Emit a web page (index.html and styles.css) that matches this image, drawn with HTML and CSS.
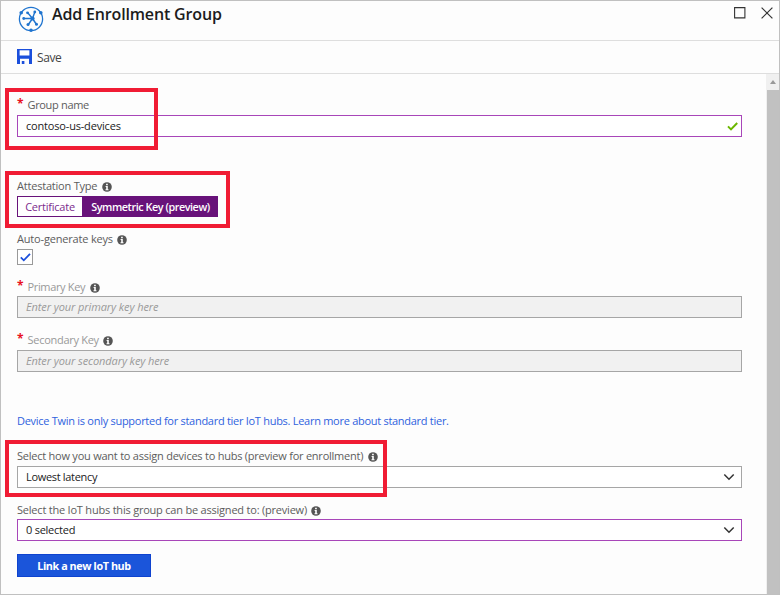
FILE: index.html
```html
<!DOCTYPE html>
<html lang="en">
<head>
<meta charset="utf-8">
<title>Add Enrollment Group</title>
<link rel="stylesheet" href="styles.css">
</head>
<body>
<svg class="defs" width="0" height="0">
  <symbol id="info" viewBox="0 0 10 10"><circle cx="5" cy="5" r="4.8" fill="#555"/><path d="M4.1 1.7h1.7v1.5H4.1zM3.6 4h2.2v3.3h.7v.9H3.5v-.9h.7V4.9h-.6z" fill="#fff"/></symbol>
  <symbol id="chevron" viewBox="0 0 12 8"><path d="M1.3 1.5 6 6.2l4.7-4.7" fill="none" stroke="#333" stroke-width="1.5"/></symbol>
</svg>
<div class="blade">
  <header class="header">
    <svg class="logo" viewBox="0 0 26 26">
      <g fill="none" stroke="#1f74cf">
        <circle cx="13" cy="13" r="11.6" stroke-width="1.3"/>
        <path d="M14.5 12.5 9.5 6.5M14.5 12.5 17 5.5M14.5 12.5H6M14.5 12.5 10 19M14.5 12.5l4 6" stroke-width="1.4"/>
      </g>
      <g fill="#1f74cf">
        <circle cx="14.5" cy="12.5" r="2.1"/><circle cx="9.5" cy="6.8" r="1.4"/><circle cx="16.8" cy="6" r="1.4"/><circle cx="5.7" cy="12.5" r="1.4"/><circle cx="10" cy="18.5" r="1.5"/><circle cx="18.5" cy="18.2" r="1.5"/>
        <circle cx="3.2" cy="6.8" r="1.8"/><circle cx="22.8" cy="6.8" r="1.8"/><circle cx="13" cy="24.2" r="1.8"/>
      </g>
    </svg>
    <h1 class="title"><span>Add Enrollment Group</span></h1>
    <div class="window-buttons">
      <svg width="12" height="12" viewBox="0 0 12 12"><path d="M.6.6h10.3v10.3H.6z" fill="none" stroke="#333" stroke-width="1.1"/></svg>
      <svg width="12" height="12" viewBox="0 0 12 12"><path d="m.6.6 10.8 10.8M11.4.6.6 11.4" stroke="#333" stroke-width="1.2"/></svg>
    </div>
  </header>
  <div class="toolbar">
    <svg width="15" height="15" viewBox="0 0 15 15"><path d="M0 0h15v15h-3V9.7H3V15H0z" fill="#1b4fdc"/><path d="M2.6 1.3h9.8v5.2H2.6z" fill="#fff"/><path d="M4.8 12h2.6v3H4.8z" fill="#1b4fdc"/></svg>
    <span class="save">Save</span>
  </div>
  <main class="body">
    <div class="form">
      <div class="label"><b class="star">*</b><span class="t-group">Group name</span></div>
      <div class="input active"><span class="t-contoso">contoso-us-devices</span><svg class="valid" width="11" height="9" viewBox="0 0 11 9"><path d="m1 4.4 3 3L10.2 1" fill="none" stroke="#6bb700" stroke-width="2"/></svg></div>

      <div class="label attestation"><span class="t-attest">Attestation Type</span><svg class="info"><use href="#info"/></svg></div>
      <div class="toggle"><span class="option"><span class="t-cert">Certificate</span></span><span class="option selected"><span class="t-sym">Symmetric Key (preview)</span></span></div>

      <div class="label auto"><span class="t-auto">Auto-generate keys</span><svg class="info"><use href="#info"/></svg></div>
      <div class="checkbox"><svg width="11" height="9" viewBox="0 0 11 9"><path d="m.8 4.3 3 3L10 .9" fill="none" stroke="#1b4fdc" stroke-width="1.8"/></svg></div>

      <div class="label muted primary"><b class="star">*</b><span class="t-primary">Primary Key</span><svg class="info"><use href="#info"/></svg></div>
      <div class="input disabled"><span class="t-enter">Enter your primary key here</span></div>

      <div class="label muted secondary"><b class="star">*</b><span class="t-secondary">Secondary Key</span><svg class="info"><use href="#info"/></svg></div>
      <div class="input disabled"><span class="t-enter">Enter your secondary key here</span></div>

      <div class="label link"><span class="t-link">Device Twin is only supported for standard tier IoT hubs. Learn more about standard tier.</span></div>

      <div class="label assign"><span class="t-assign">Select how you want to assign devices to hubs (preview for enrollment)</span><svg class="info"><use href="#info"/></svg></div>
      <div class="input select"><span class="t-lowest">Lowest latency</span><svg class="chevron"><use href="#chevron"/></svg></div>

      <div class="label hubs"><span class="t-hubs">Select the IoT hubs this group can be assigned to: (preview)</span><svg class="info"><use href="#info"/></svg></div>
      <div class="input active select"><span class="t-zero">0 selected</span><svg class="chevron"><use href="#chevron"/></svg></div>

      <div class="button"><span class="t-button">Link a new IoT hub</span></div>
    </div>
    <div class="scrollbar"><div class="up"></div><div class="thumb"></div></div>
  </main>
  <div class="highlight one"></div>
  <div class="highlight two"></div>
  <div class="highlight three"></div>
</div>
</body>
</html>
```
FILE: styles.css
```css
* { box-sizing: border-box; }
body { margin: 0; font-family: "Open Sans", "Noto Sans", sans-serif; font-size: 11px; color: #333; }
svg { display: block; flex: none; }
.defs { position: absolute; }
.blade { position: relative; display: flex; flex-direction: column; width: 780px; height: 595px; border: 1px solid #c0c0c0; background: #fdfdfd; overflow: hidden; white-space: nowrap; }
.header { display: flex; flex: none; height: 40px; padding: 5px 6px 0 17px; border-bottom: 1px solid #dedede; }
.logo { width: 26px; height: 26px; }
.title { margin: -5px 0 0 8px; font-size: 16px; line-height: 26px; font-weight: 600; color: #1c1c1c; letter-spacing: -.16px; }
.window-buttons { display: flex; gap: 15px; margin: 1px 0 0 auto; }
.toolbar { display: flex; flex: none; align-items: center; gap: 5px; height: 33px; padding: 0 16px 2px; border-bottom: 1px solid #dedede; }
.save { font-size: 12px; letter-spacing: -.4px; padding-top: 2px; color: #444; }
.body { display: flex; flex: 1; min-height: 0; }
.form { flex: 1; padding: 23px 23px 0 16px; }
.label { display: flex; align-items: center; height: 16px; margin-bottom: 2px; padding-bottom: 2px; color: #5c5c5c; }
.star { width: 10.5px; font-size: 12px; line-height: 12px; color: #e81123; }
.info { width: 10px; height: 10px; margin: 3px 0 0 4.5px; }
.input { display: flex; align-items: center; justify-content: space-between; width: 725px; height: 22px; padding: 0 3px 0 8px; border: 1px solid #a6a6a6; background: #fff; color: #222; }
.input > span { padding-bottom: 2px; }
.active { border-color: #a846b9; }
.disabled { background: #f1f1f1; color: #999; font-style: italic; }
.select { padding-right: 6px; }
.chevron { width: 12px; height: 8px; }
.muted { color: #999; }
.attestation { margin-top: 41px; }
.toggle { display: flex; width: 201px; height: 21px; }
.option { display: flex; align-items: center; justify-content: center; width: 66px; border: 1px solid #68127a; background: #fff; color: #7c2c8d; }
.selected { flex: 1; background: #68127a; color: #fff; font-weight: 600; }
.auto { margin-top: 14px; }
.checkbox { display: flex; align-items: center; justify-content: center; width: 16px; height: 16px; border: 1px solid #999; background: #fff; }
.primary { margin: 14px 0 1px; }
.secondary { margin-top: 14px; }
.link { margin-top: 41px; color: #2f62dd; }
.assign { margin-top: 19px; }
.hubs { margin: 14px 0 1px; }
.button { display: flex; align-items: center; justify-content: center; width: 134px; height: 23px; margin-top: 13px; border: 1px solid #0f43cf; background: #1b55da; color: #fff; font-weight: 700; }
.t-group { letter-spacing: -.33px; }
.t-contoso { letter-spacing: -.18px; }
.t-attest { letter-spacing: -.21px; }
.t-cert { letter-spacing: -.23px; }
.t-sym { font-size: 10.8px; letter-spacing: -.44px; }
.t-auto { letter-spacing: -.18px; }
.t-primary { letter-spacing: -.35px; }
.t-secondary { letter-spacing: -.28px; }
.t-enter { letter-spacing: -.1px; }
.t-link { letter-spacing: -.28px; }
.t-assign { letter-spacing: -.235px; }
.t-hubs { letter-spacing: -.21px; }
.t-lowest { letter-spacing: -.32px; }
.t-zero { letter-spacing: -.25px; }
.t-button { font-size: 10.8px; letter-spacing: -.44px; }
.scrollbar { width: 13px; background: #f0f0f0; }
.up { height: 16px; padding: 6px 0 0 4px; }
.up::before { content: ""; display: block; width: 0; border: 3px solid transparent; border-top: 0; border-bottom: 4px solid #999; }
.thumb { height: 504px; margin-left: 1px; background: #c1c1c1; }
.highlight { position: absolute; left: 4px; border: 4px solid #f01c34; }
.one { top: 87px; width: 153px; height: 62px; }
.two { top: 170px; width: 225px; height: 57px; }
.three { top: 439px; width: 382px; height: 57px; }
```
